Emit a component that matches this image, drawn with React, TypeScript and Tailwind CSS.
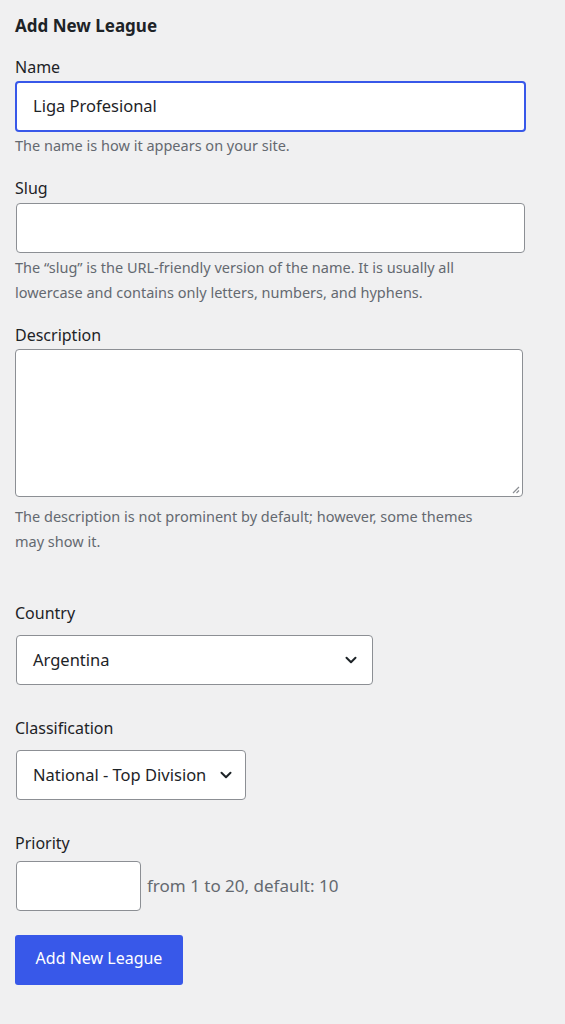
import React from 'react'

const font = { fontFamily: '"Noto Sans", "Open Sans", sans-serif' }

function Chevron() {
  return (
    <svg width="14" height="14" viewBox="0 0 14 14" fill="none" className="shrink-0">
      <path d="M2.5 4.8 L7 9.2 L11.5 4.8" stroke="#1d2327" strokeWidth="2" strokeLinecap="round" strokeLinejoin="round" />
    </svg>
  )
}

function Help({ children, className = '' }: { children: React.ReactNode; className?: string }) {
  return <p className={`text-[14.5px] leading-[25px] text-[#646970] ${className}`}>{children}</p>
}

function Label({ children, className = '' }: { children: React.ReactNode; className?: string }) {
  return <label className={`block text-[16px] leading-[22px] text-[#1d2327] ${className}`}>{children}</label>
}

export default function App() {
  return (
    <div style={font} className="min-h-[1024px] w-full bg-[#f0f0f1] pl-[15px] pr-[39px] pt-[14px]">
      <h2 className="text-[17px] font-bold leading-[24px] text-[#1d2327]">Add New League</h2>

      <Label className="mt-[18px] mb-[3px]">Name</Label>
      <div className="flex h-[51px] w-[511px] items-center rounded-[4px] border-2 border-[#3858e9] bg-white px-[16px] text-[16.5px] text-[#1d2327]">
        Liga Profesional
      </div>
      <Help className="mt-[1px]">The name is how it appears on your site.</Help>

      <Label className="mt-[19px] mb-[4px]">Slug</Label>
      <div className="ml-px h-[50px] w-[509px] rounded-[4px] border border-[#8c8f94] bg-white" />
      <Help className="mt-[2px]">
        The “slug” is the URL-friendly version of the name. It is usually all
        <br />
        lowercase and contains only letters, numbers, and hyphens.
      </Help>

      <Label className="mt-[19px] mb-[3px]">Description</Label>
      <div className="relative h-[148px] w-[508px] rounded-[4px] border border-[#8c8f94] bg-white">
        <svg width="10" height="10" viewBox="0 0 10 10" className="absolute bottom-[2px] right-[2px]">
          <path d="M9 3 L3 9 M9 6.5 L6.5 9" stroke="#8c8f94" strokeWidth="1.2" />
        </svg>
      </div>
      <Help className="mt-[7px]">
        The description is not prominent by default; however, some themes
        <br />
        may show it.
      </Help>

      <Label className="mt-[48px] mb-[11px]">Country</Label>
      <div className="ml-px flex h-[50px] w-[357px] items-center justify-between rounded-[4px] border border-[#8c8f94] bg-white pl-[16px] pr-[14px] text-[16.5px] text-[#1d2327]">
        <span>Argentina</span>
        <Chevron />
      </div>

      <Label className="mt-[32px] mb-[11px]">Classification</Label>
      <div className="ml-px flex h-[50px] w-[230px] items-center justify-between rounded-[4px] border border-[#8c8f94] bg-white pl-[16px] pr-[12px] text-[16.5px] text-[#1d2327]">
        <span className="whitespace-nowrap">National - Top Division</span>
        <Chevron />
      </div>

      <Label className="mt-[32px] mb-[7px]">Priority</Label>
      <div className="flex items-center gap-[6px]">
        <div className="ml-px h-[50px] w-[125px] rounded-[4px] border border-[#8c8f94] bg-white" />
        <span className="text-[17px] text-[#646970]">from 1 to 20, default: 10</span>
      </div>

      <button className="mt-[24px] flex h-[50px] w-[168px] items-center justify-center rounded-[3px] bg-[#3858e9] pb-[4px] text-[16px] text-white">
        Add New League
      </button>
    </div>
  )
}
